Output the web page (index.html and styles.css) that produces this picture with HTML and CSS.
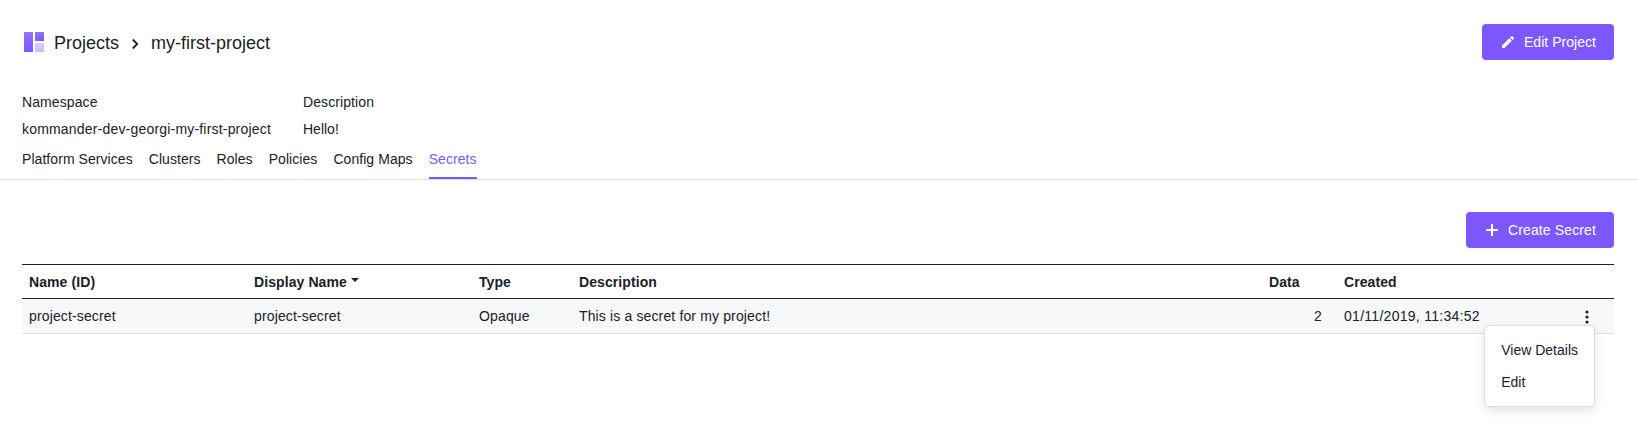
FILE: index.html
```html
<!DOCTYPE html>
<html lang="en">
<head>
<meta charset="utf-8">
<title>my-first-project</title>
<link rel="stylesheet" href="styles.css">
</head>
<body>
<header class="page-header">
  <div class="breadcrumb">
    <svg class="logo" width="20" height="20" viewBox="0 0 20 20">
      <defs>
        <linearGradient id="tile" x1="0" y1="0" x2="0" y2="1"><stop offset="0" stop-color="#9571ff"/><stop offset="1" stop-color="#7d58ff"/></linearGradient>
        <linearGradient id="pale" x1="0" y1="0" x2="0" y2="1"><stop offset="0" stop-color="#d8ccff"/><stop offset="1" stop-color="#cbbcff"/></linearGradient>
      </defs>
      <rect width="9" height="20" rx=".6" fill="url(#tile)"/>
      <rect x="11" width="9" height="9" rx=".6" fill="url(#tile)"/>
      <rect x="11" y="11" width="9" height="9" rx=".6" fill="url(#pale)"/>
    </svg>
    <span>Projects</span>
    <svg class="chevron" width="16" height="16" viewBox="0 0 16 16"><path d="M5.800 3.500 10.200 8l-4.400 4.500" fill="none" stroke="#1b2029" stroke-width="1.800"/></svg>
    <span>my-first-project</span>
  </div>
  <button class="btn">
    <svg width="16" height="16" viewBox="0 0 16 16" fill="#fff"><path d="M2 11.500V14h2.500l7.370-7.370-2.500-2.500zM13.800 4.700c.26-.26.26-.68 0-.94l-1.560-1.560a.66.660 0 0 0-.94 0l-1.220 1.220 2.500 2.500z"/></svg>
    <span>Edit Project</span>
  </button>
</header>
<dl class="details">
  <div><dt>Namespace</dt><dd>kommander-dev-georgi-my-first-project</dd></div>
  <div><dt>Description</dt><dd class="short">Hello!</dd></div>
</dl>
<nav class="tabs">
  <a>Platform Services</a><a>Clusters</a><a>Roles</a><a>Policies</a><a>Config Maps</a><a class="active">Secrets</a>
</nav>
<main>
  <div class="toolbar">
    <button class="btn create">
      <svg width="16" height="16" viewBox="0 0 16 16" fill="#fff"><path d="M7 2h2v5h5v2H9v5H7V9H2V7h5z"/></svg>
      <span>Create Secret</span>
    </button>
  </div>
  <div class="table">
    <div class="row head">
      <span>Name (ID)</span>
      <span>Display Name<i class="caret"></i></span>
      <span>Type</span>
      <span>Description</span>
      <span>Data</span>
      <span>Created</span>
      <span></span>
    </div>
    <div class="row body">
      <span>project-secret</span>
      <span>project-secret</span>
      <span>Opaque</span>
      <span>This is a secret for my project!</span>
      <span class="num">2</span>
      <span class="date">01/11/2019, 11:34:52</span>
      <span class="actions">
        <svg width="16" height="16" viewBox="0 0 16 16" fill="#1b2029"><circle cx="8" cy="3" r="1.600"/><circle cx="8" cy="8" r="1.600"/><circle cx="8" cy="13" r="1.600"/></svg>
        <div class="menu"><div>View Details</div><div>Edit</div></div>
      </span>
    </div>
  </div>
</main>
</body>
</html>
```
FILE: styles.css
```css
* { box-sizing: border-box; }
body {
  margin: 0;
  min-height: 100vh;
  background: #fff;
  color: #1b2029;
  font: 14px/20px "Liberation Sans", Arial, sans-serif;
}
.page-header {
  display: flex;
  justify-content: space-between;
  padding: 24px 23px 0 24px;
}
.breadcrumb {
  display: flex;
  align-items: center;
  height: 36px;
  font-size: 18px;
}
.breadcrumb span { padding-top: 2px; }
.logo { margin-right: 10px; }
.chevron { margin: 3px 8px 0; }
.btn {
  display: flex;
  align-items: center;
  gap: 8px;
  height: 36px;
  padding: 0 18px;
  border: 0;
  border-radius: 4px;
  background: #7d58ff;
  color: #fff;
  font: inherit;
  letter-spacing: .04px;
}
.create { letter-spacing: .13px; }
.details {
  display: flex;
  gap: 32px;
  margin: 0;
  padding: 32px 22px 0;
}
.details dt {
  margin-bottom: 7px;
  letter-spacing: .09px;
}
.details dd {
  margin: 0;
  letter-spacing: .19px;
}
.details .short { letter-spacing: 0; }
.tabs {
  display: flex;
  gap: 16px;
  margin-top: 10px;
  padding: 0 22px;
  border-bottom: 1px solid #dadde2;
  letter-spacing: .06px;
}
.tabs a {
  height: 30px;
  border-bottom: 2px solid transparent;
}
.tabs .active {
  color: #7d58ff;
  border-color: #7d58ff;
}
main { padding: 32px 23px 0 22px; }
.toolbar {
  display: flex;
  justify-content: flex-end;
  margin-bottom: 16px;
}
.table { border-top: 1px solid #1b2029; }
.row {
  display: grid;
  grid-template-columns: 225px 225px 100px 690px 75px 1fr 54px;
  align-items: center;
}
.row > span { padding-left: 7px; }
.head {
  height: 34px;
  border-bottom: 1px solid #1b2029;
  font-weight: bold;
  letter-spacing: .09px;
}
.caret {
  display: inline-block;
  margin-left: 4px;
  border: 4px solid transparent;
  border-top-color: #1b2029;
  border-bottom: 0;
  vertical-align: 5px;
}
.body {
  height: 35px;
  background: #f7f8fa;
  border-bottom: 1px solid #dadde2;
  letter-spacing: .14px;
}
.date { letter-spacing: .28px; }
.row > .num {
  padding-right: 15px;
  text-align: right;
}
.row > .actions {
  position: relative;
  display: flex;
  padding: 2px 0 0 19px;
}
.menu {
  position: absolute;
  top: 18px;
  right: 19px;
  padding: 8px 0;
  border: 1px solid #dadde2;
  border-radius: 5px;
  background: #fff;
  box-shadow: 0 4px 10px rgba(27, 32, 41, .12);
  letter-spacing: 0;
  white-space: nowrap;
}
.menu div {
  padding: 0 16px;
  line-height: 32px;
}
```
